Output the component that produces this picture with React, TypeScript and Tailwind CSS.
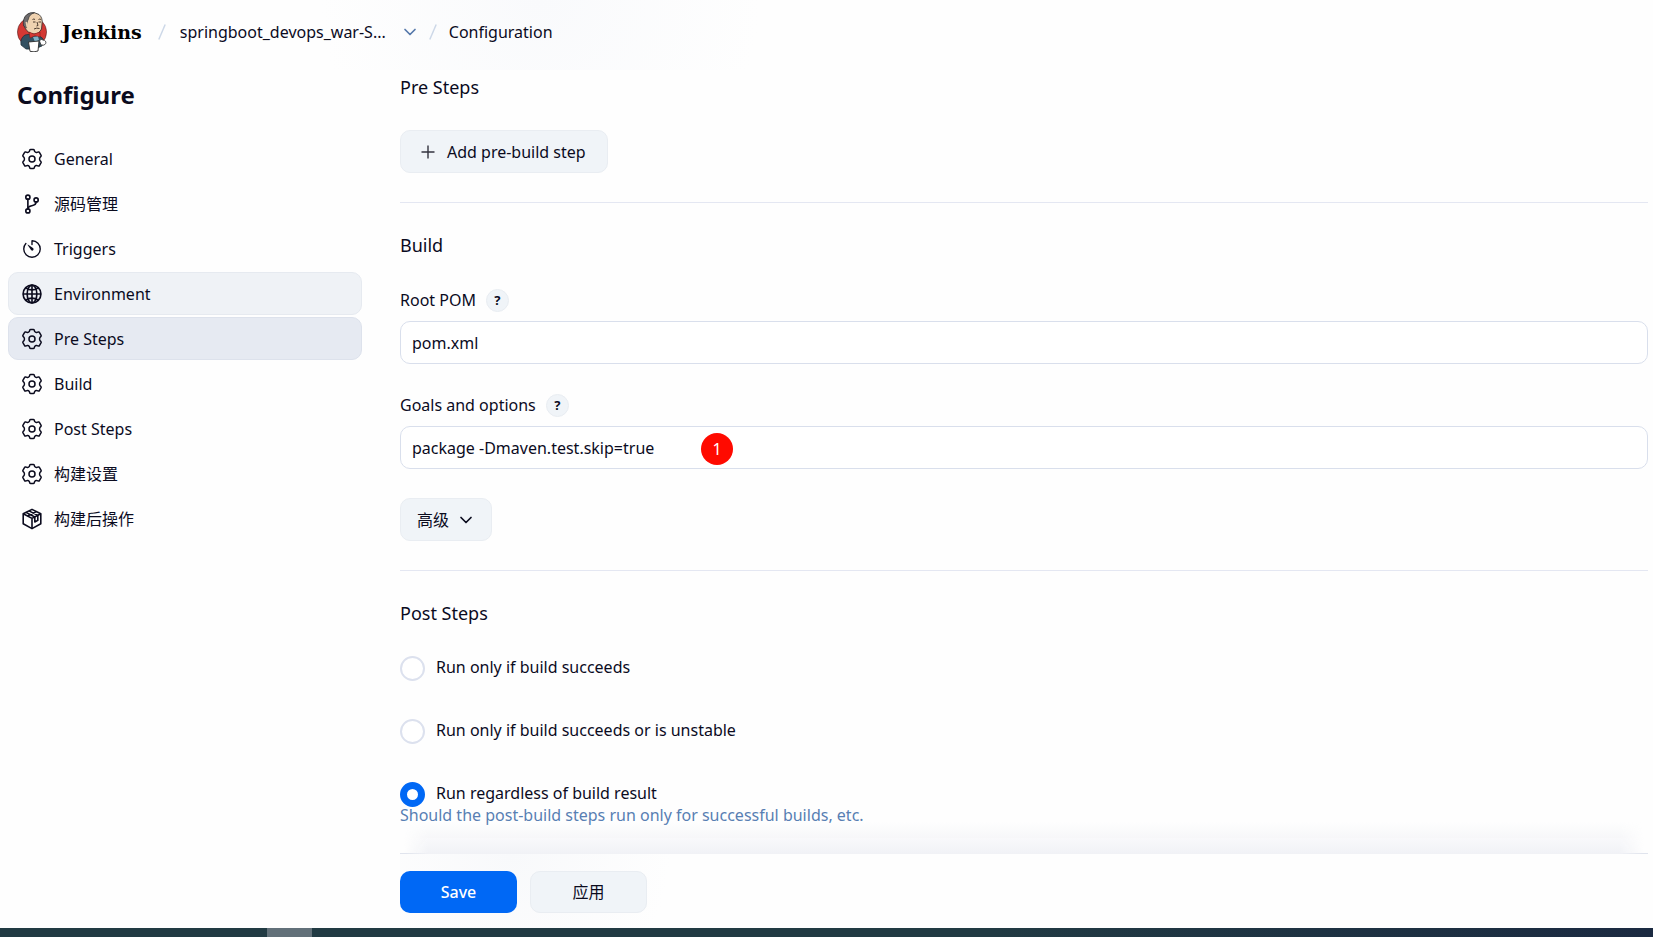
import { useState, type ReactNode } from "react";
import { IoGitBranchOutline, IoGlobeOutline, IoTimerOutline } from "react-icons/io5";

type IconName = "gear" | "branch" | "timer" | "globe" | "package";

interface NavItem {
    label: string;
    icon: IconName;
    className: string;
}

const IDLE = "border-transparent";

const NAV_ITEMS: NavItem[] = [
    { label: "General", icon: "gear", className: IDLE },
    { label: "源码管理", icon: "branch", className: IDLE },
    { label: "Triggers", icon: "timer", className: IDLE },
    { label: "Environment", icon: "globe", className: "border-[#e6eaf0] bg-[#eff2f6]" },
    { label: "Pre Steps", icon: "gear", className: "border-[#dde2ec] bg-[#e6eaf2]" },
    { label: "Build", icon: "gear", className: IDLE },
    { label: "Post Steps", icon: "gear", className: IDLE },
    { label: "构建设置", icon: "gear", className: IDLE },
    { label: "构建后操作", icon: "package", className: IDLE },
];

const RUN_OPTIONS = [
    "Run only if build succeeds",
    "Run only if build succeeds or is unstable",
    "Run regardless of build result",
];

const SECONDARY_BUTTON =
    "flex items-center rounded-[10px] border border-[#e9edf2] bg-[#f0f4f8]";

const ION_ICON = "size-[22px] [&_*]:[stroke-width:38px]";

function GearIcon() {
    return (
        <svg viewBox="0 0 22 22" className="size-[22px]" fill="none" stroke="currentColor" strokeWidth="1.5" strokeLinejoin="round">
            <path d="M8.8 2 Q9 1.4 9.7 1.4 H12.3 Q13 1.4 13.2 2 L13.6 3.4 Q14.5 4.7 15.9 4.4 L17.4 4 Q18.1 3.8 18.4 4.4 L20.1 7.3 Q20.4 7.9 19.9 8.4 L18.9 9.5 Q18.1 11 18.9 12.5 L19.9 13.6 Q20.4 14.1 20.1 14.7 L18.4 17.6 Q18.1 18.2 17.4 18 L15.9 17.6 Q14.5 17.3 13.6 18.6 L13.2 20 Q13 20.6 12.3 20.6 H9.7 Q9 20.6 8.8 20 L8.4 18.6 Q7.5 17.3 6.1 17.6 L4.6 18 Q3.9 18.2 3.6 17.6 L1.9 14.7 Q1.6 14.1 2.1 13.6 L3.1 12.5 Q3.9 11 3.1 9.5 L2.1 8.4 Q1.6 7.9 1.9 7.3 L3.6 4.4 Q3.9 3.8 4.6 4 L6.1 4.4 Q7.5 4.7 8.4 3.4 Z" />
            <circle cx="11" cy="11" r="3" />
        </svg>
    );
}

function PackageIcon() {
    return (
        <svg viewBox="0 0 22 22" className="size-[22px]" fill="none" stroke="currentColor" strokeWidth="1.6" strokeLinejoin="round">
            <path d="M11 1.4 L19.8 5.8 V15.8 L11 20.6 L2.2 15.8 V5.8 Z" />
            <path d="M2.2 5.8 L11 10.4 L19.8 5.8 M11 10.4 V20.6" />
            <path d="M5 4.4 L13.8 9 V14 L16.8 12.4 V7.4 L8 2.9 M6.5 8 L15.4 3.6" />
        </svg>
    );
}

function NavIcon({ name }: { name: IconName }) {
    switch (name) {
        case "branch":
            return <IoGitBranchOutline className={ION_ICON} />;
        case "timer":
            return <IoTimerOutline className="size-[22px]" />;
        case "globe":
            return <IoGlobeOutline className={ION_ICON} />;
        case "package":
            return <PackageIcon />;
        default:
            return <GearIcon />;
    }
}

function JenkinsLogo() {
    return (
        <svg viewBox="0 0 30 40" className="h-10 w-[30px]" aria-hidden="true">
            <circle cx="15" cy="20" r="14.6" fill="#d33833" stroke="#3b1a1a" strokeWidth="0.5" />
            <path d="M4 33 Q3 26 8 23 L14 22 L22 24 Q26 25 27 30 L25 34 Q18 38 9 37 Z" fill="#335061" stroke="#1d2b33" strokeWidth="0.7" />
            <path d="M7 12 Q6 4 12 1.5 Q18 -0.5 22 2.5 Q26 6 25 12 L24.5 17 Q22 22 17 22 Q11 21.5 8 16 Z" fill="#efd2b0" stroke="#2b2b2b" strokeWidth="0.8" />
            <path d="M6.5 14 Q5.5 6 10 2.5 Q13 0 17.5 0.7 Q12 2.5 11.5 7 L10.5 9 L9.5 16 Z" fill="#6d6b6d" stroke="#2b2b2b" strokeWidth="0.6" />
            <path d="M8.5 10 Q10.5 9 10.8 12 L11 15 L9.5 15.5 Z" fill="#efd2b0" />
            <path d="M15.5 7.5 Q17 6.5 18 7.5 M21.5 7.5 Q23 6.5 24 7.5 M16 10 H18.5 M21.5 10 H24 M20 10 L21 13.5 L19.5 14 M17 17 Q19.5 15.5 22.5 16.5" fill="none" stroke="#3a2a20" strokeWidth="0.9" />
            <path d="M12 20 L17 22 L23 20 V25 L18 23.8 L13 26 Z" fill="#d33833" stroke="#7b1712" strokeWidth="0.5" />
            <path d="M16 25 L21 24.5 L22 28 L18 30 Z" fill="#81b0c4" />
            <path d="M11.5 30 L22 29 L21 39 Q17 40.5 13 39.3 Z" fill="#fff" stroke="#2b2b2b" strokeWidth="0.9" />
            <path d="M22.5 29 Q24 26 26 28 Q29.5 28.5 28.8 31.5 Q27.5 34 24 33 Z" fill="#fff" stroke="#2b2b2b" strokeWidth="0.8" />
        </svg>
    );
}

function Chevron({ className }: { className: string }) {
    return (
        <svg viewBox="0 0 14 14" className={className} fill="none" stroke="currentColor" strokeWidth="1.7" strokeLinecap="round" strokeLinejoin="round">
            <path d="M2 4.5 L7 9.5 L12 4.5" />
        </svg>
    );
}

function Slash() {
    return (
        <svg viewBox="0 0 8 16" className="h-4 w-2 text-[#cdd8e8]" stroke="currentColor" strokeWidth="1.5">
            <path d="M7.2 0.5 L0.8 15.5" />
        </svg>
    );
}

function Header() {
    return (
        <header className="flex h-[70px] shrink-0 items-center bg-[radial-gradient(circle_at_540px_0,#f9fafc,#fefefe_220px)] pb-[6px] pl-[17px]">
            <a href="#" className="flex items-center gap-[15px]">
                <JenkinsLogo />
                <span className="font-['DejaVu_Serif',serif] text-[19px] leading-6 font-bold text-black">Jenkins</span>
            </a>
            <span className="ml-4">
                <Slash />
            </span>
            <a href="#" className="ml-[14px]">springboot_devops_war-S...</a>
            <button aria-label="More projects" className="ml-[17px] text-[#5679ab]">
                <Chevron className="size-[14px]" />
            </button>
            <span className="ml-3">
                <Slash />
            </span>
            <span className="ml-3">Configuration</span>
        </header>
    );
}

function Sidebar() {
    return (
        <aside className="w-[362px] shrink-0 pl-2">
            <h1 className="mb-[17px] pl-[9px] text-2xl leading-[50px] font-bold">Configure</h1>
            <nav className="flex flex-col gap-[2px]">
                {NAV_ITEMS.map((item) => (
                    <a
                        key={item.label}
                        href="#"
                        className={`flex h-[43px] items-center gap-[11px] rounded-[10px] border pl-3 ${item.className}`}
                    >
                        <NavIcon name={item.icon} />
                        <span>{item.label}</span>
                    </a>
                ))}
            </nav>
        </aside>
    );
}

function Field({ id, label, value, children }: { id: string; label: string; value: string; children?: ReactNode }) {
    return (
        <div>
            <div className="mb-[9px] flex h-6 items-center gap-[10px]">
                <label htmlFor={id}>{label}</label>
                <button
                    aria-label={`Help for ${label}`}
                    className="flex size-[23px] items-center justify-center rounded-full border border-[#e9edf2] bg-[#f0f4f8] text-[13px] leading-4 font-bold"
                >
                    ?
                </button>
            </div>
            <div className="relative">
                <input
                    id={id}
                    defaultValue={value}
                    className="h-[43px] w-full rounded-[10px] border border-[#d9dfec] bg-white px-[11px] outline-none"
                />
                {children}
            </div>
        </div>
    );
}

function SectionTitle({ children }: { children: ReactNode }) {
    return <h2 className="text-lg leading-6">{children}</h2>;
}

function PostSteps() {
    const [selected, setSelected] = useState(2);

    return (
        <section className="pt-[30px]">
            <SectionTitle>Post Steps</SectionTitle>
            <div className="mt-[31px] flex flex-col gap-10">
                {RUN_OPTIONS.map((option, index) => (
                    <label key={option} className="flex h-[23px] items-start gap-[11px]">
                        <input
                            type="radio"
                            name="run-condition"
                            checked={selected === index}
                            onChange={() => setSelected(index)}
                            className="size-[25px] shrink-0 appearance-none rounded-full border-2 border-[#dce1ee] bg-white checked:border-[7px] checked:border-[#0068f5]"
                        />
                        <span className="leading-[22px]">{option}</span>
                    </label>
                ))}
            </div>
            <p className="leading-5 text-[#587fb3]">Should the post-build steps run only for successful builds, etc.</p>
        </section>
    );
}

export default function App() {
    return (
        <div className="flex h-screen flex-col overflow-hidden bg-[#fefefe] font-['Noto_Sans','Noto_Sans_CJK_SC',sans-serif] text-base leading-6 text-[#0b0b1e]">
            <Header />
            <div className="flex min-h-0 flex-1">
                <Sidebar />
                <main className="flex min-w-0 flex-1 flex-col pr-[5px] pl-[38px]">
                    <div className="min-h-0 flex-1 overflow-hidden">
                        <section className="border-b border-[#e4e7f2] pt-[5px] pb-[29px]">
                            <SectionTitle>Pre Steps</SectionTitle>
                            <button className={`mt-[31px] h-[43px] gap-2 pr-[21px] pl-4 ${SECONDARY_BUTTON}`}>
                                <svg viewBox="0 0 22 22" className="size-[22px]" stroke="#33333f" strokeWidth="1.4">
                                    <path d="M11 4.5 V17.5 M4.5 11 H17.5" />
                                </svg>
                                Add pre-build step
                            </button>
                        </section>

                        <section className="border-b border-[#e4e7f2] pt-[30px] pb-[29px]">
                            <SectionTitle>Build</SectionTitle>
                            <div className="mt-[31px] flex flex-col gap-[29px]">
                                <Field id="root-pom" label="Root POM" value="pom.xml" />
                                <Field id="goals" label="Goals and options" value="package -Dmaven.test.skip=true">
                                    <span className="absolute top-[7px] left-[301px] flex size-8 items-center justify-center rounded-full bg-[#ff0a00] text-white">
                                        1
                                    </span>
                                </Field>
                            </div>
                            <button className={`mt-[29px] h-[43px] gap-[10px] pr-[18px] pl-4 ${SECONDARY_BUTTON}`}>
                                高级
                                <Chevron className="size-[14px]" />
                            </button>
                        </section>

                        <PostSteps />
                    </div>

                    <footer className="relative flex shrink-0 gap-[13px] border-t border-[#e0e4ed] bg-[radial-gradient(circle_at_110px_0,#f8f9fb,#fefefe_160px)] pt-[17px] pb-[15px]">
                        <div className="pointer-events-none absolute inset-x-1 bottom-full h-8 bg-linear-to-t from-[#f1f2f6] to-transparent [mask-image:linear-gradient(to_right,transparent,black_24px,black_calc(100%-24px),transparent)]" />
                        <button className="h-[42px] w-[117px] rounded-[10px] bg-[#0068f5] font-medium text-white">Save</button>
                        <button className={`h-[42px] w-[117px] justify-center ${SECONDARY_BUTTON}`}>应用</button>
                    </footer>
                </main>
            </div>
            <div className="h-[9px] shrink-0 bg-linear-to-r from-[#213a43] from-60% to-[#1b2a41]">
                <div className="ml-[267px] h-full w-[45px] bg-[#627079]" />
            </div>
        </div>
    );
}
